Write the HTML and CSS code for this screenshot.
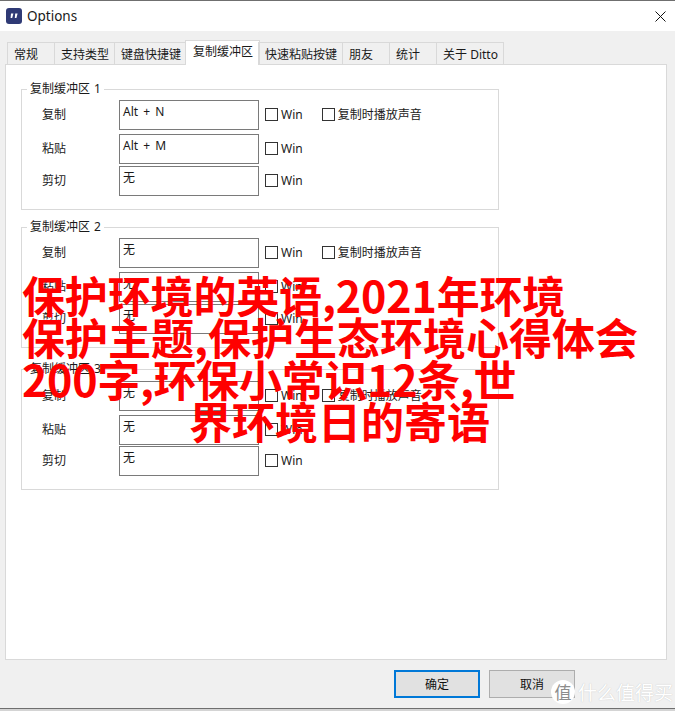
FILE: index.html
```html
<!DOCTYPE html>
<html lang="zh-CN">
<head>
  <meta charset="UTF-8" />
  <meta name="viewport" content="width=device-width, initial-scale=1.0"/>
  <title>Options</title>
  <link rel="stylesheet" href="styles.css">
</head>
<body>
  <div class="window">
    <header class="titlebar">
      <svg class="app-icon" width="16" height="16" viewBox="0 0 16 16">
        <rect width="16" height="16" rx="3" fill="#2f3a75"/>
        <path d="M5 5.5h2.4L6.2 10H4.6zM9.2 5.5h2.4L10.4 10H8.8z" fill="#fff"/>
      </svg>
      <span class="title">Options</span>
      <svg class="close" width="11" height="11" viewBox="0 0 11 11">
        <path d="M.5.5l10 10M10.5.5l-10 10" stroke="#111" stroke-width="1" fill="none"/>
      </svg>
    </header>

    <div class="content">
      <nav class="tabs">
        <span class="tab">常规</span>
        <span class="tab">支持类型</span>
        <span class="tab">键盘快捷键</span>
        <span class="tab active">复制缓冲区</span>
        <span class="tab">快速粘贴按键</span>
        <span class="tab">朋友</span>
        <span class="tab">统计</span>
        <span class="tab">关于 Ditto</span>
      </nav>

      <main class="panel">
        <fieldset class="group">
          <legend>复制缓冲区 1</legend>
          <div class="row">
            <label class="name">复制</label>
            <div class="hotkey">Alt + N</div>
            <label class="check"><i class="box"></i>Win</label>
            <label class="check sound"><i class="box"></i>复制时播放声音</label>
          </div>
          <div class="row">
            <label class="name">粘贴</label>
            <div class="hotkey">Alt + M</div>
            <label class="check"><i class="box"></i>Win</label>
          </div>
          <div class="row near">
            <label class="name">剪切</label>
            <div class="hotkey">无</div>
            <label class="check"><i class="box"></i>Win</label>
          </div>
        </fieldset>

        <fieldset class="group second">
          <legend>复制缓冲区 2</legend>
          <div class="row">
            <label class="name">复制</label>
            <div class="hotkey">无</div>
            <label class="check"><i class="box"></i>Win</label>
            <label class="check sound"><i class="box"></i>复制时播放声音</label>
          </div>
          <div class="row">
            <label class="name">粘贴</label>
            <div class="hotkey">无</div>
            <label class="check"><i class="box"></i>Win</label>
          </div>
          <div class="row near">
            <label class="name">剪切</label>
            <div class="hotkey">无</div>
            <label class="check"><i class="box"></i>Win</label>
          </div>
        </fieldset>

        <fieldset class="group third">
          <legend>复制缓冲区 3</legend>
          <div class="row">
            <label class="name">复制</label>
            <div class="hotkey">无</div>
            <label class="check"><i class="box"></i>Win</label>
            <label class="check sound"><i class="box"></i>复制时播放声音</label>
          </div>
          <div class="row">
            <label class="name">粘贴</label>
            <div class="hotkey">无</div>
            <label class="check"><i class="box"></i>Win</label>
          </div>
          <div class="row nearer">
            <label class="name">剪切</label>
            <div class="hotkey">无</div>
            <label class="check"><i class="box"></i>Win</label>
          </div>
        </fieldset>
      </main>

      <footer class="actions">
        <button class="btn primary">确定</button>
        <button class="btn">取消</button>
      </footer>
    </div>
  </div>

  <h1 class="headline">
    <span class="first">保护环境的英语,2021年环境</span>
    <span>保护主题,保护生态环境心得体会</span>
    <span class="third-line">200字,环保小常识12条,世</span>
    <span class="last">界环境日的寄语</span>
  </h1>

  <div class="watermark">
    <span class="seal">值</span>
    <span class="brand">什么值得买</span>
  </div>
</body>
</html>
```

FILE: styles.css
```css
* {
  box-sizing: border-box;
}
body {
  margin: 0;
  height: 711px;
  overflow: hidden;
  position: relative;
  background: #d4d4d4;
  color: #1a1a1a;
  font-family: "Noto Sans", "Noto Sans CJK SC", sans-serif;
  font-size: 12px;
}
.window {
  height: 709px;
  display: flex;
  flex-direction: column;
  border-top: 1px solid #6f6f6f;
  border-bottom: 1px solid #6f6f6f;
  background: #f0f0f0;
}
.titlebar {
  height: 30px;
  flex: none;
  display: flex;
  align-items: center;
  padding: 0 9px 0 6px;
  background: #fff;
}
.title {
  margin-left: 5px;
  font-size: 13.5px;
}
.close {
  margin-left: auto;
}
.content {
  flex: 1;
  display: flex;
  flex-direction: column;
  padding: 9px 8px 0 5px;
}

/* tabs */
.tabs {
  height: 25px;
  flex: none;
  display: flex;
  align-items: flex-end;
  padding-left: 2px;
  position: relative;
  z-index: 1;
  margin-bottom: -1px;
}
.tab {
  height: 23px;
  min-width: 48px;
  padding: 0 5px 1px 6px;
  margin-right: -1px;
  display: flex;
  align-items: center;
  border: 1px solid #d9d9d9;
  border-bottom: none;
  white-space: nowrap;
}
.tab.active {
  height: 25px;
  padding: 0 6px 4px 7px;
  margin-left: -1px;
  margin-right: -2px;
  background: #fff;
}
.panel {
  flex: 1;
  background: #fff;
  border: 1px solid #d9d9d9;
  padding: 16px 15px 0;
}

/* groups */
.group {
  width: 478px;
  height: 129px;
  margin: 0;
  padding: 2px 0 0 20px;
  border: 1px solid #d9d9d9;
}
.group legend {
  margin-left: -15px;
  padding: 0 3px 2px;
  line-height: 15px;
  word-spacing: 1px;
}
.group.second {
  margin-top: 9px;
}
.group.third {
  margin-top: 13px;
  padding-top: 3px;
}
.row {
  display: flex;
  align-items: center;
  height: 30px;
  margin-bottom: 4px;
}
.row.near {
  margin-top: -2px;
}
.row.nearer {
  margin-top: -3px;
}
.name {
  width: 77px;
  flex: none;
  margin-bottom: 2px;
}
.hotkey {
  width: 140px;
  height: 30px;
  flex: none;
  padding: 1px 3px;
  border: 1px solid #7a7a7a;
  line-height: 20px;
  word-spacing: 2px;
}
.check {
  display: flex;
  align-items: center;
  margin-left: 6px;
  margin-bottom: 2px;
}
.check.sound {
  margin-left: 19px;
}
.box {
  width: 13px;
  height: 13px;
  margin-right: 3px;
  border: 1px solid #333;
}

/* bottom buttons */
.actions {
  height: 48px;
  flex: none;
  display: flex;
  justify-content: flex-end;
  gap: 9px;
  padding: 10px 92px 0 0;
}
.btn {
  width: 86px;
  height: 28px;
  padding: 0;
  background: #e1e1e1;
  border: 1px solid #adadad;
  color: #111;
  font: inherit;
}
.btn.primary {
  border: 2px solid #0078d7;
}

/* red title laid over the screenshot */
.headline {
  position: absolute;
  left: 22px;
  top: 273px;
  width: 630px;
  margin: 0;
  color: #f00;
  font-family: "Noto Sans CJK SC", sans-serif;
  font-size: 43px;
  font-weight: 700;
  line-height: 42px;
}
.headline span {
  display: block;
  white-space: nowrap;
}
.headline .first {
  letter-spacing: -0.15px;
}
.headline .third-line {
  letter-spacing: -0.3px;
}
.headline .last {
  margin-left: 167px;
}

/* site watermark */
.watermark {
  position: absolute;
  left: 551px;
  top: 680px;
  display: flex;
  align-items: center;
  color: #fff;
  font-family: "Noto Sans CJK SC", sans-serif;
}
.seal {
  width: 24px;
  height: 24px;
  border-radius: 50%;
  background: #fff;
  color: #8c8c8c;
  font-size: 17px;
  line-height: 24px;
  text-align: center;
}
.brand {
  margin-left: 3px;
  font-size: 19px;
  line-height: 24px;
  text-shadow: 0 0 1px #bbb;
}
```
